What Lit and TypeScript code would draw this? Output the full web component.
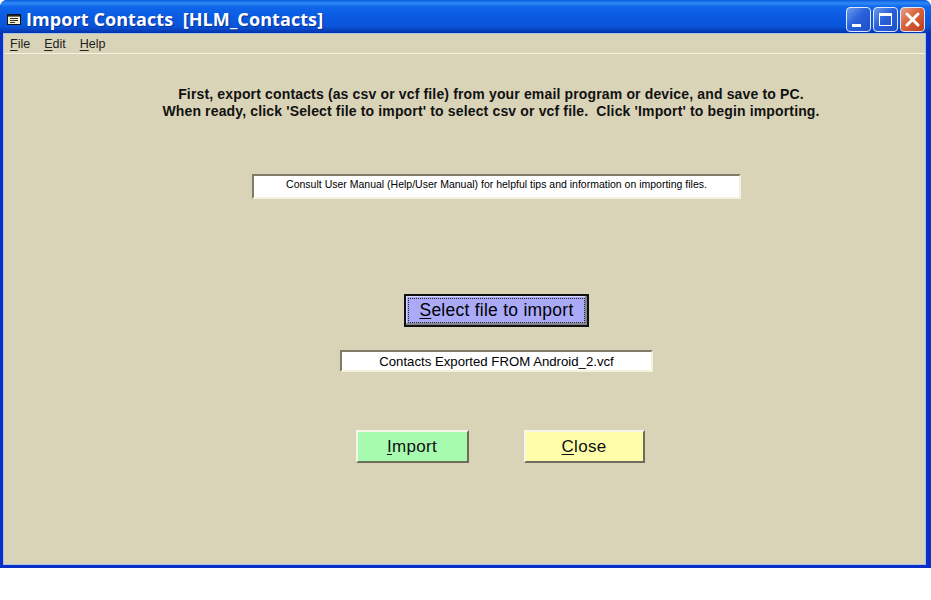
import { LitElement, html, css } from "lit";
import { customElement } from "lit/decorators.js";

@customElement("app-root")
export class AppRoot extends LitElement {
  static styles = css`
    :host { display: block; width: 931px; height: 600px; background: #fff; font-family: "Liberation Sans", Arial, sans-serif; color: #000; overflow: hidden; }
    .window { height: 568px; display: flex; flex-direction: column; background: #0a2fc4; border-radius: 7px 7px 0 0; box-sizing: border-box; }
    .title { height: 34px; flex: none; box-sizing: border-box; display: flex; align-items: center; padding: 4px 6px 0 7px;
      background: linear-gradient(180deg, #0a5ae0 0%, #2f8af5 9%, #0f66ea 20%, #0a5be2 50%, #0a54d8 78%, #0640bc 90%, #0230a4 100%); border-radius: 7px 7px 0 0; }
    .sysicon { width: 14px; height: 11px; flex: none; margin-right: 5px; }
    .caption { color: #fff; font: bold 18px "Open Sans", "Liberation Sans", sans-serif; letter-spacing: 0.08px; white-space: pre; text-shadow: 1px 1px 1px #06309c; flex: 1; line-height: 24px; }
    .wbtns { display: flex; gap: 2px; }
    .wbtn { width: 23px; height: 23px; border: 1px solid #dfe8fb; border-radius: 4px; display: block; background: linear-gradient(135deg, #6f9cec 0%, #2a62dc 45%, #1c4fc8 100%); box-sizing: content-box; }
    .wbtn.close { background: linear-gradient(135deg, #e8a088 0%, #d8623a 45%, #bd3c1c 100%); }
    .wbtn svg { display: block; width: 23px; height: 23px; }
    .client { flex: 1; margin: 0 6px 4px 4px; background: #d9d4b8; outline: 1px solid #a9c0e8; display: flex; flex-direction: column; min-height: 0; }
    .menu { height: 19px; flex: none; display: flex; gap: 14px; padding: 0 0 0 6px; align-items: center; font: 12.5px "Liberation Sans", sans-serif; border-bottom: 1px solid #f6f3e2; color: #222; }
    .body { flex: 1; display: flex; flex-direction: column; align-items: center; padding-top: 32px; padding-left: 64px; position: relative; }
    .intro { font: bold 14px/16.5px "Liberation Sans", sans-serif; text-align: center; white-space: pre; margin-left: -11px; color: #111; letter-spacing: 0.15px; }
    .well { background: #fff; box-sizing: border-box; text-align: center; white-space: nowrap; border-style: solid; border-width: 2px; border-color: #7d7a66 #f4f1de #f4f1de #7d7a66; }
    .info { width: 489px; height: 25px; margin-top: 55px; font: 10.5px/17px "Liberation Sans", sans-serif; }
    .select { width: 185px; height: 33px; margin-top: 95px; box-sizing: border-box; border: 2px solid #111; background: #aaaaf8; color: #000; font: 17.5px "Liberation Sans", sans-serif; letter-spacing: 0.25px; padding: 0; display: flex; align-items: center; justify-content: center; box-shadow: inset -2px -2px 0 #85858c, inset 1px 1px 0 #d8d8ff; position: relative; }
    .select::after { content: ""; position: absolute; inset: 2px; border: 1px dotted #222; }
    .file { width: 313px; height: 22px; margin-top: 23px; font: 13.2px/19px "Liberation Sans", sans-serif; }
    .actions { display: flex; gap: 55px; margin-top: 58px; margin-left: 7px; }
    .action { height: 33px; box-sizing: border-box; font: 17px "Liberation Sans", sans-serif; letter-spacing: 0.3px; padding: 0; display: flex; align-items: center; justify-content: center; border: 2px solid; border-color: #f6f6ea #6e6c5c #6e6c5c #f6f6ea; color: #111; }
    .import { width: 113px; background: #a6fbae; }
    .close-btn { width: 121px; background: #fdfdaa; }
    u { text-decoration-thickness: 1px; text-underline-offset: 2px; }
  `;

  render() {
    return html`
      <div class="window">
        <div class="title">
          <svg class="sysicon" viewBox="0 0 14 11">
            <rect x="0.5" y="0.5" width="13" height="10" fill="#f4efc8" stroke="#111" />
            <rect x="1" y="1" width="12" height="1.6" fill="#222" />
            <path d="M3 4.5h8M3 6.5h8M3 8.5h5" stroke="#333" stroke-width="1" />
          </svg>
          <div class="caption">Import Contacts  [HLM_Contacts]</div>
          <div class="wbtns">
            <span class="wbtn"><svg viewBox="0 0 23 23"><rect x="5" y="16" width="9" height="3" fill="#fff" /></svg></span>
            <span class="wbtn"><svg viewBox="0 0 23 23"><rect x="5.5" y="5.5" width="12" height="12" fill="none" stroke="#fff" /><rect x="5" y="5" width="13" height="3" fill="#fff" /></svg></span>
            <span class="wbtn close"><svg viewBox="0 0 23 23"><path d="M6 6L17 17M17 6L6 17" stroke="#fff" stroke-width="3" stroke-linecap="round" /></svg></span>
          </div>
        </div>
        <div class="client">
          <div class="menu">
            <span><u>F</u>ile</span><span><u>E</u>dit</span><span><u>H</u>elp</span>
          </div>
          <div class="body">
            <div class="intro">First, export contacts (as csv or vcf file) from your email program or device, and save to PC.
When ready, click 'Select file to import' to select csv or vcf file.  Click 'Import' to begin importing.</div>
            <div class="well info">Consult User Manual (Help/User Manual) for helpful tips and information on importing files.</div>
            <button class="select"><span><u>S</u>elect file to import</span></button>
            <div class="well file">Contacts Exported FROM Android_2.vcf</div>
            <div class="actions">
              <button class="action import"><span><u>I</u>mport</span></button>
              <button class="action close-btn"><span><u>C</u>lose</span></button>
            </div>
          </div>
        </div>
      </div>
    `;
  }
}
